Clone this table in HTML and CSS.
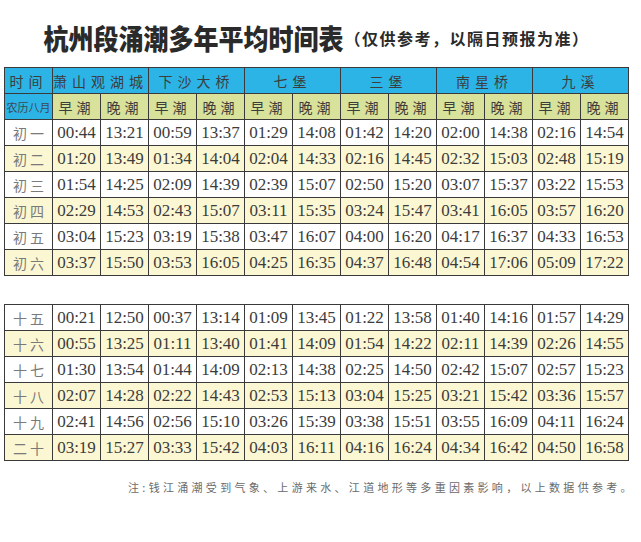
FILE: index.html
```html
<!DOCTYPE html>
<html lang="zh-CN">
<head>
<meta charset="utf-8">
<link rel="stylesheet" href="styles.css">
</head>
<body>
<div class="page">
  <h1 class="title"><span class="main">杭州段涌潮多年平均时间表</span><span class="sub">（仅供参考，以隔日预报为准）</span></h1>
  <table class="tide">
    <colgroup><col><col><col><col><col><col><col><col><col><col><col><col><col></colgroup>
    <tr class="h1">
      <th class="corner">时间</th>
      <th colspan="2">萧山观湖城</th>
      <th colspan="2">下沙大桥</th>
      <th colspan="2">七堡</th>
      <th colspan="2">三堡</th>
      <th colspan="2">南星桥</th>
      <th colspan="2">九溪</th>
    </tr>
    <tr class="h2">
      <th class="corner small">农历八月</th>
      <th>早潮</th><th>晚潮</th><th>早潮</th><th>晚潮</th><th>早潮</th><th>晚潮</th>
      <th>早潮</th><th>晚潮</th><th>早潮</th><th>晚潮</th><th>早潮</th><th>晚潮</th>
    </tr>
    <tr><td class="day">初一</td><td>00:44</td><td>13:21</td><td>00:59</td><td>13:37</td><td>01:29</td><td>14:08</td><td>01:42</td><td>14:20</td><td>02:00</td><td>14:38</td><td>02:16</td><td>14:54</td></tr>
    <tr class="alt"><td class="day">初二</td><td>01:20</td><td>13:49</td><td>01:34</td><td>14:04</td><td>02:04</td><td>14:33</td><td>02:16</td><td>14:45</td><td>02:32</td><td>15:03</td><td>02:48</td><td>15:19</td></tr>
    <tr><td class="day">初三</td><td>01:54</td><td>14:25</td><td>02:09</td><td>14:39</td><td>02:39</td><td>15:07</td><td>02:50</td><td>15:20</td><td>03:07</td><td>15:37</td><td>03:22</td><td>15:53</td></tr>
    <tr class="alt"><td class="day">初四</td><td>02:29</td><td>14:53</td><td>02:43</td><td>15:07</td><td>03:11</td><td>15:35</td><td>03:24</td><td>15:47</td><td>03:41</td><td>16:05</td><td>03:57</td><td>16:20</td></tr>
    <tr><td class="day">初五</td><td>03:04</td><td>15:23</td><td>03:19</td><td>15:38</td><td>03:47</td><td>16:07</td><td>04:00</td><td>16:20</td><td>04:17</td><td>16:37</td><td>04:33</td><td>16:53</td></tr>
    <tr class="alt"><td class="day">初六</td><td>03:37</td><td>15:50</td><td>03:53</td><td>16:05</td><td>04:25</td><td>16:35</td><td>04:37</td><td>16:48</td><td>04:54</td><td>17:06</td><td>05:09</td><td>17:22</td></tr>
  </table>
  <table class="tide second">
    <colgroup><col><col><col><col><col><col><col><col><col><col><col><col><col></colgroup>
    <tr><td class="day">十五</td><td>00:21</td><td>12:50</td><td>00:37</td><td>13:14</td><td>01:09</td><td>13:45</td><td>01:22</td><td>13:58</td><td>01:40</td><td>14:16</td><td>01:57</td><td>14:29</td></tr>
    <tr class="alt"><td class="day">十六</td><td>00:55</td><td>13:25</td><td>01:11</td><td>13:40</td><td>01:41</td><td>14:09</td><td>01:54</td><td>14:22</td><td>02:11</td><td>14:39</td><td>02:26</td><td>14:55</td></tr>
    <tr><td class="day">十七</td><td>01:30</td><td>13:54</td><td>01:44</td><td>14:09</td><td>02:13</td><td>14:38</td><td>02:25</td><td>14:50</td><td>02:42</td><td>15:07</td><td>02:57</td><td>15:23</td></tr>
    <tr class="alt"><td class="day">十八</td><td>02:07</td><td>14:28</td><td>02:22</td><td>14:43</td><td>02:53</td><td>15:13</td><td>03:04</td><td>15:25</td><td>03:21</td><td>15:42</td><td>03:36</td><td>15:57</td></tr>
    <tr><td class="day">十九</td><td>02:41</td><td>14:56</td><td>02:56</td><td>15:10</td><td>03:26</td><td>15:39</td><td>03:38</td><td>15:51</td><td>03:55</td><td>16:09</td><td>04:11</td><td>16:24</td></tr>
    <tr class="alt"><td class="day">二十</td><td>03:19</td><td>15:27</td><td>03:33</td><td>15:42</td><td>04:03</td><td>16:11</td><td>04:16</td><td>16:24</td><td>04:34</td><td>16:42</td><td>04:50</td><td>16:58</td></tr>
  </table>
  <p class="note">注:钱江涌潮受到气象、上游来水、江道地形等多重因素影响，以上数据供参考。</p>
</div>
</body>
</html>
```
FILE: styles.css
```css
html, body {
  margin: 0;
  padding: 0;
  background: #ffffff;
}
.page {
  width: 641px;
  padding: 0 0 0 4px;
  box-sizing: border-box;
}
.title {
  margin: 0;
  width: 625px;
  height: 67px;
  display: flex;
  align-items: center;
  justify-content: center;
  padding-top: 8px;
  box-sizing: border-box;
  font-family: "Noto Sans CJK SC", sans-serif;
  color: #2a2a2a;
  white-space: nowrap;
}
.title .main {
  font-size: 25px;
  font-weight: 900;
  letter-spacing: 0;
  display: inline-block;
  transform: scaleY(1.12);
}
.title .sub {
  font-size: 16px;
  font-weight: 700;
  letter-spacing: 1.5px;
  margin-left: 1px;
}
.tide {
  border-collapse: collapse;
  table-layout: fixed;
  width: 625px;
  border: 1px solid #3a3a3a;
}
.tide col {
  width: 48px;
}
.tide th, .tide td {
  border: 1px solid #3a3a3a;
  height: 25px;
  padding: 0;
  text-align: center;
  vertical-align: middle;
  overflow: hidden;
  white-space: nowrap;
}
.tide th {
  font-family: "Noto Sans CJK SC", sans-serif;
  font-weight: 400;
  font-size: 14px;
  letter-spacing: 4px;
  color: #3d3d3d;
}
.h1 th {
  background: #2cb4e6;
  letter-spacing: 5px;
}
.h2 th {
  background: #d8e29a;
}
.h2 th.corner {
  background: #2cb4e6;
}
.tide th.small {
  font-size: 11px;
  letter-spacing: 0;
  color: #3d4a55;
}
.tide td {
  font-family: "Liberation Serif", "Times New Roman", serif;
  font-size: 17px;
  color: #3c3c3c;
  background: #ffffff;
}
.tide tr.alt td {
  background: #fbf7d3;
}
.tide td.day {
  font-family: "Noto Sans CJK SC", sans-serif;
  font-size: 14px;
  letter-spacing: 3px;
  color: #7a7a7a;
  padding-left: 3px;
}
.second {
  margin-top: 28px;
}
.note {
  margin: 18px 0 0 124px;
  font-family: "Noto Sans CJK SC", sans-serif;
  font-size: 11px;
  letter-spacing: 3.3px;
  color: #6a6a6a;
  white-space: nowrap;
}
```
